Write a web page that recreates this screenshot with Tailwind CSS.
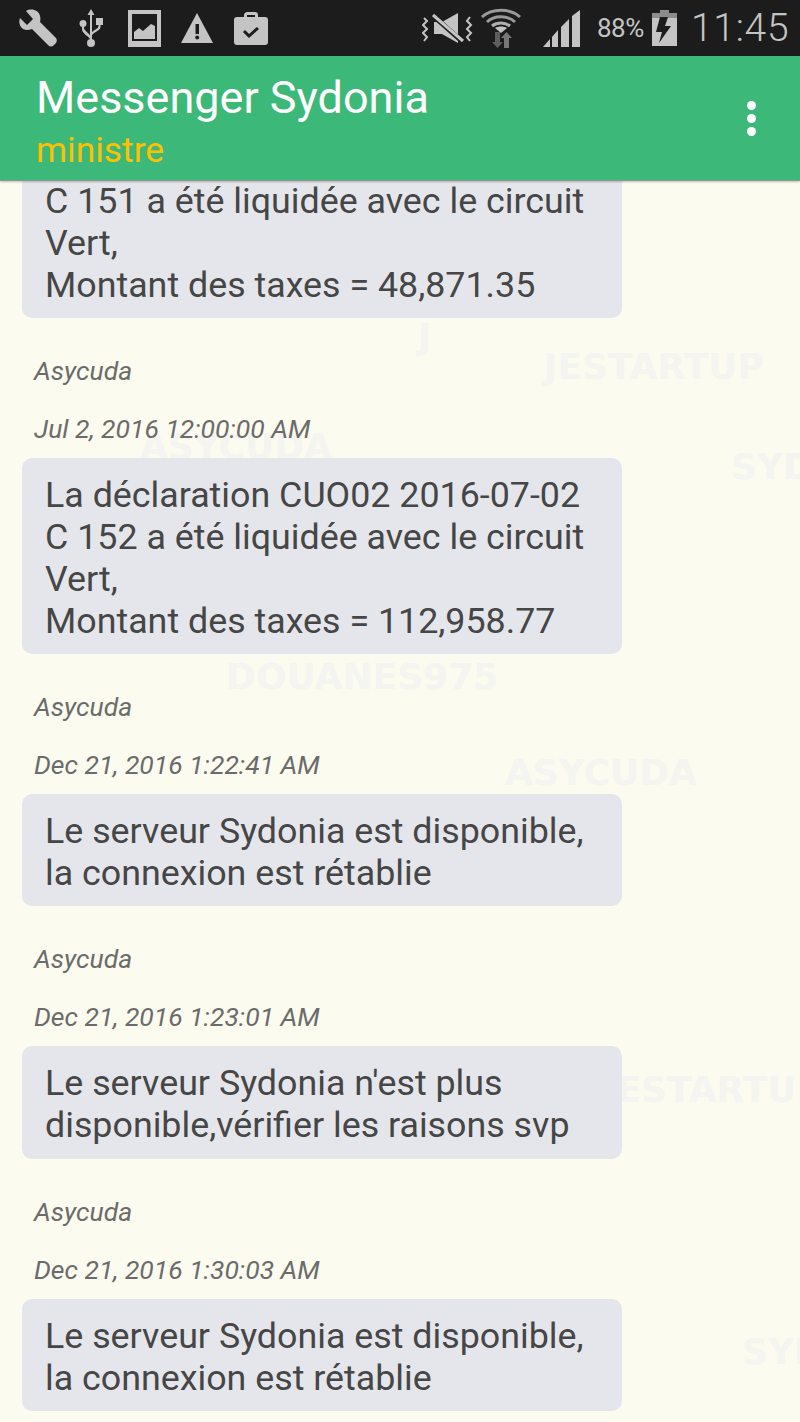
<!DOCTYPE html>
<html lang="en">
<head>
    <meta charset="UTF-8">
    <meta name="viewport" content="width=device-width, initial-scale=1.0">
    <title>Messenger Sydonia</title>
    <script src="https://cdn.jsdelivr.net/npm/@tailwindcss/browser@4"></script>
</head>
<body class="w-[800px] h-[1422px] overflow-hidden flex flex-col bg-[#fbfbef] font-['Roboto',sans-serif]">

    <!-- Status bar -->
    <div class="h-[56px] shrink-0 bg-[#1c1c1c] flex items-center text-[#c4c4c4] relative z-20">
        <svg class="ml-[19px] w-[38px] h-[38px]" viewBox="0 0 38 38" fill="#c4c4c4"><path d="M1 9 L8 16 L14 10 L7 2 C12 -1 20 1 21 7 C22 10 21 12 21 13 L37 29 C39 32 37 34 35 36 C33 38 31 38 29 36 L13 20 C8 22 4 21 2 18 C0 15 0 12 1 9 Z"/></svg>
        <svg class="ml-[22px] w-[24px] h-[38px]" viewBox="0 0 24 38" fill="#c4c4c4"><path d="M12 0 L15.5 6 L13 6 L13 30 L11 30 L11 6 L8.500 6 Z"/><circle cx="12" cy="34" r="4"/><circle cx="4" cy="14.500" r="3.500"/><rect x="17" y="9" width="7" height="7"/><path d="M3 16 H5 V19 C5 22 11 24 11.500 28 L11.500 31 C10 27 3 25 3 20 Z"/><path d="M19.500 15 H21.500 V18 C21.500 22 14 23 12.500 27 L12.500 24 C14 21 19.500 20 19.500 17 Z"/></svg>
        <svg class="ml-[25px] w-[33px] h-[37px]" viewBox="0 0 33 37"><path fill="#c4c4c4" fill-rule="evenodd" d="M0 0 H33 V37 H0 Z M4 4 V31 H29 V4 Z"/><path fill="#c4c4c4" d="M6 29 V22 L11 18 L15 21 L23 14 L27 16 V29 Z"/></svg>
        <svg class="ml-[20px] w-[32px] h-[30px]" viewBox="0 0 32 30"><path fill="#c4c4c4" d="M16 0 L32 30 H0 Z"/><rect x="14.500" y="11" width="3.500" height="10" fill="#1c1c1c"/><circle cx="16.200" cy="24.500" r="2" fill="#1c1c1c"/></svg>
        <svg class="ml-[21px] w-[34px] h-[33px]" viewBox="0 0 34 33"><path fill="#c4c4c4" fill-rule="evenodd" d="M10 5 V3 C10 1 12 0 13 0 H21 C23 0 24 1 24 3 V5 H31 C33 5 34 6 34 8 V30 C34 32 33 33 31 33 H3 C1 33 0 32 0 30 V8 C0 6 1 5 3 5 Z M13 5 H21 V3 H13 Z"/><path fill="none" stroke="#1c1c1c" stroke-width="3" d="M10 19 L15 24 L24 16"/></svg>

        <svg class="ml-[154px] w-[51px] h-[32px]" viewBox="0 0 51 32" fill="none"><path fill="#c4c4c4" d="M12 10 H20 L36 1 V31 L20 22 H12 Z"/><path stroke="#1c1c1c" stroke-width="5" d="M8 1 L42 31"/><path stroke="#c4c4c4" stroke-width="3" d="M11 3 L41 29"/><path stroke="#c4c4c4" stroke-width="2" d="M2 6 L5 9 L1 13 L5 17 L1 21 L5 25 L2 29 M48 5 L45 9 L49 13 L45 17 L49 21 L45 25 L48 29"/></svg>
        <svg class="ml-[8px] w-[40px] h-[40px]" viewBox="0 0 40 40" fill="none"><path stroke="#9a9a9a" stroke-width="3" d="M1 9 C11 0 29 0 39 9"/><path stroke="#9a9a9a" stroke-width="3" d="M6 14 C13 7 27 7 34 14"/><path stroke="#b0b0b0" stroke-width="3" d="M11 18 C16 14 24 14 29 18"/><path fill="#c4c4c4" d="M20 25 L14 20 C17 18 23 18 26 20 Z"/><path fill="#5e5e5e" d="M14 24 H19 V34 H22 L16.500 40 L11 34 H14 Z"/><path fill="#777" d="M23 40 H28 V30 H31 L25.500 24 L20 30 H23 Z"/></svg>
        <svg class="ml-[22px] w-[37px] h-[37px]" viewBox="0 0 37 37" fill="#c4c4c4"><path d="M0 37 L7 29 V37 Z"/><path d="M9 27 L15 20 V37 H9 Z"/><path d="M18 17 L26 9 V37 H18 Z"/><path d="M29 6 L37 0 V37 H29 Z"/></svg>
        <span class="ml-[17px] w-[47px] text-[26px] tracking-[-0.5px]">88%</span>
        <svg class="ml-[8px] w-[25px] h-[36px]" viewBox="0 0 25 36"><path fill="#8c8c8c" d="M8 0 H17 V3 H25 V8 H0 V3 H8 Z"/><path fill="#c4c4c4" d="M0 8 H25 V36 H0 Z"/><path fill="#1c1c1c" d="M16 7 H8 L4 22 H10 L7 33 L19 16 H13 Z"/></svg>
        <span class="ml-[14px] text-[39px] font-light tracking-[0.7px]">11:45</span>
    </div>

    <!-- App bar -->
    <header class="h-[125px] shrink-0 bg-[#3cb878] flex items-center justify-between pl-[36px] pr-[44px] border-b border-[#8a9a90] shadow-[0_1px_2px_rgba(0,0,0,0.25)] relative z-10">
        <div class="flex flex-col pt-[7px]">
            <h1 class="text-[45px] leading-[48px] text-white">Messenger Sydonia</h1>
            <p class="text-[35.4px] leading-[40px] mt-[8px] text-[#ffc000]">ministre</p>
        </div>
        <div class="flex flex-col gap-[4px]">
            <span class="w-[9px] h-[9px] rounded-full bg-white"></span>
            <span class="w-[9px] h-[9px] rounded-full bg-white"></span>
            <span class="w-[9px] h-[9px] rounded-full bg-white"></span>
        </div>
    </header>

    <!-- Messages -->
    <main class="relative flex-1 overflow-hidden">
        <!-- Watermark -->
        <div class="absolute inset-0 font-['DejaVu_Sans',sans-serif] font-bold text-[36px] leading-[42px] text-[#f4f4f1] whitespace-nowrap">
            <span class="absolute left-[418px] top-[135px]">J</span>
            <span class="absolute left-[544px] top-[165px]">JESTARTUP</span>
            <span class="absolute left-[140px] top-[245px]">ASYCUDA</span>
            <span class="absolute left-[731px] top-[265px]">SYDONIA</span>
            <span class="absolute left-[226px] top-[475px]">DOUANES975</span>
            <span class="absolute left-[505px] top-[571px]">ASYCUDA</span>
            <span class="absolute left-[603px] top-[888px]">JESTARTUP</span>
            <span class="absolute left-[742px] top-[1150px]">SYDONIA</span>
        </div>

        <div class="relative flex flex-col mt-[-59px] pl-[22px]">
            <div class="w-[600px] rounded-[10px] bg-[#e5e6eb] pl-[23px] pt-[16px] pb-[12px] text-[35.8px] leading-[42px] text-[#464646]">
                La déclaration CUO02 2016-07-02<br>C 151 a été liquidée avec le circuit<br>Vert,<br>Montant des taxes = 48,871.35
            </div>
            <p class="mt-[38px] pl-[12px] text-[26.5px] leading-[30px] italic text-[#6b6b6b]">Asycuda</p>
            <p class="mt-[28px] pl-[12px] text-[26.5px] leading-[30px] italic text-[#6b6b6b]">Jul 2, 2016 12:00:00 AM</p>
            <div class="mt-[14px] w-[600px] rounded-[10px] bg-[#e5e6eb] pl-[23px] pt-[16px] pb-[12px] text-[35.8px] leading-[42px] text-[#464646]">
                La déclaration CUO02 2016-07-02<br>C 152 a été liquidée avec le circuit<br>Vert,<br>Montant des taxes = 112,958.77
            </div>
            <p class="mt-[38px] pl-[12px] text-[26.5px] leading-[30px] italic text-[#6b6b6b]">Asycuda</p>
            <p class="mt-[28px] pl-[12px] text-[26.5px] leading-[30px] italic text-[#6b6b6b]">Dec 21, 2016 1:22:41 AM</p>
            <div class="mt-[14px] w-[600px] rounded-[10px] bg-[#e5e6eb] pl-[23px] pt-[16px] pb-[12px] text-[35.8px] leading-[42px] text-[#464646]">
                Le serveur Sydonia est disponible,<br>la connexion est rétablie
            </div>
            <p class="mt-[38px] pl-[12px] text-[26.5px] leading-[30px] italic text-[#6b6b6b]">Asycuda</p>
            <p class="mt-[28px] pl-[12px] text-[26.5px] leading-[30px] italic text-[#6b6b6b]">Dec 21, 2016 1:23:01 AM</p>
            <div class="mt-[14px] w-[600px] rounded-[10px] bg-[#e5e6eb] pl-[23px] pt-[16px] pb-[13px] text-[35.8px] leading-[42px] text-[#464646]">
                Le serveur Sydonia n'est plus<br>disponible,vérifier les raisons svp
            </div>
            <p class="mt-[38px] pl-[12px] text-[26.5px] leading-[30px] italic text-[#6b6b6b]">Asycuda</p>
            <p class="mt-[28px] pl-[12px] text-[26.5px] leading-[30px] italic text-[#6b6b6b]">Dec 21, 2016 1:30:03 AM</p>
            <div class="mt-[14px] w-[600px] rounded-[10px] bg-[#e5e6eb] pl-[23px] pt-[16px] pb-[12px] text-[35.8px] leading-[42px] text-[#464646]">
                Le serveur Sydonia est disponible,<br>la connexion est rétablie
            </div>
        </div>
    </main>
</body>
</html>
